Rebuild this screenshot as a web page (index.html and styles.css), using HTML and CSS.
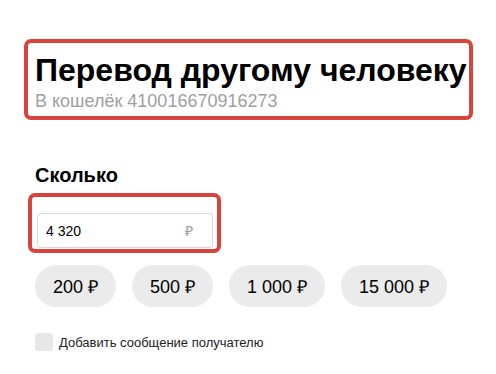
FILE: index.html
```html
<!DOCTYPE html>
<html lang="ru">
<head>
<meta charset="utf-8">
<link rel="stylesheet" href="styles.css">
</head>
<body>
<div class="page">
  <div class="head-box">
    <h1 class="title">Перевод другому человеку</h1>
    <div class="subtitle">В кошелёк 410016670916273</div>
  </div>
  <div class="label">Сколько</div>
  <div class="amount-box">
    <div class="input">
      <span class="value">4 320</span>
      <span class="cur">₽</span>
    </div>
  </div>
  <div class="pills">
    <div class="pill pill-1">200 ₽</div>
    <div class="pill pill-2">500 ₽</div>
    <div class="pill pill-3">1 000 ₽</div>
    <div class="pill pill-4">15 000 ₽</div>
  </div>
  <label class="check">
    <span class="box"></span>
    <span class="check-text">Добавить сообщение получателю</span>
  </label>
</div>
</body>
</html>
```
FILE: styles.css
```css
html, body {
  margin: 0;
  padding: 0;
  background: #ffffff;
}
body {
  font-family: "Liberation Sans", Arial, sans-serif;
  color: #000;
}
.page {
  padding-top: 39px;
  padding-left: 24px;
  width: 496px;
  box-sizing: border-box;
}
.head-box {
  width: 449px;
  height: 81px;
  box-sizing: border-box;
  border: 4px solid #d8433b;
  border-radius: 7px;
  padding: 9px 0 0 7px;
}
.title {
  margin: 0;
  font-size: 32px;
  line-height: 36px;
  font-weight: bold;
  white-space: nowrap;
}
.subtitle {
  margin-top: 3px;
  font-size: 18px;
  line-height: 20px;
  color: #a0a0a0;
}
.label {
  margin-top: 44px;
  margin-left: 11px;
  font-size: 20px;
  line-height: 22px;
  font-weight: bold;
}
.amount-box {
  margin-top: 7px;
  margin-left: 4px;
  width: 193px;
  height: 60px;
  box-sizing: border-box;
  border: 4px solid #d8433b;
  border-radius: 7px;
  padding: 16px 4px 0 5px;
}
.input {
  height: 35px;
  box-sizing: border-box;
  border: 1px solid #d9d9d9;
  border-radius: 3px;
  display: flex;
  align-items: center;
  justify-content: space-between;
  padding: 0 19px 0 8px;
  font-size: 14px;
}
.cur {
  color: #999;
  font-size: 14px;
}
.pills {
  display: flex;
  gap: 16px;
  margin-top: 12px;
  margin-left: 11px;
}
.pill {
  height: 42px;
  border-radius: 21px;
  background: #ebebeb;
  display: flex;
  align-items: center;
  justify-content: center;
  font-size: 18px;
}
.pill-1 { width: 81px; }
.pill-2 { width: 81px; }
.pill-3 { width: 96px; }
.pill-4 { width: 106px; }
.check {
  display: flex;
  align-items: center;
  gap: 6px;
  margin-top: 26px;
  margin-left: 11px;
}
.box {
  width: 18px;
  height: 18px;
  border-radius: 3px;
  background: #e8e8e8;
}
.check-text {
  font-size: 13px;
  color: #222;
}
```
